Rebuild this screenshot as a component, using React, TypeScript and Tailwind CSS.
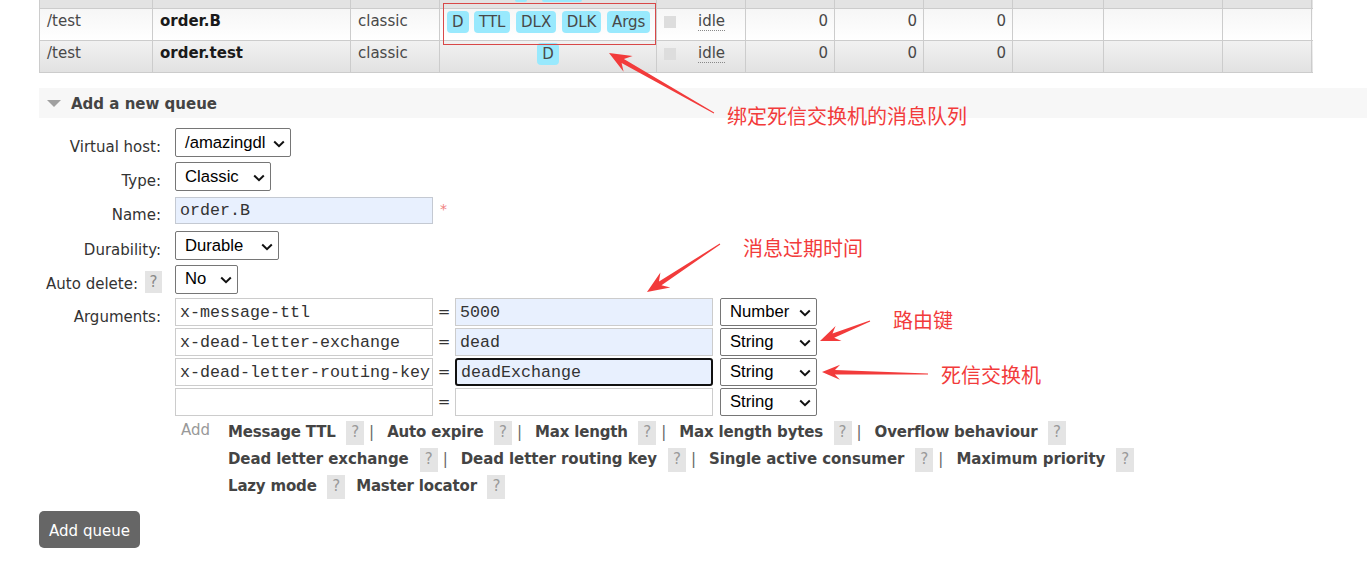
import React from "react";

const W = [
  "w-[113px]",
  "w-[198px]",
  "w-[89px]",
  "w-[217px]",
  "w-[89px]",
  "w-[89px]",
  "w-[89px]",
  "w-[89px]",
  "w-[91px]",
  "w-[119px]",
  "w-[90px]",
];

function Badge({ t }: { t: string }) {
  return (
    <span className="h-[22px] leading-[22px] px-[5px] rounded-[4px] bg-[#99e9fd] text-[#484848]">
      {t}
    </span>
  );
}

function Cell({
  i,
  children,
  className = "",
}: {
  i: number;
  children?: React.ReactNode;
  className?: string;
}) {
  return (
    <div className={`${W[i]} shrink-0 border-l border-[#cccccc] ${i === 10 ? "border-r" : ""} ${className}`}>
      {children}
    </div>
  );
}

function DataRow({ alt, name, badges }: { alt: boolean; name: string; badges: string[] }) {
  return (
    <div
      className={`flex h-[32px] border-t border-[#cccccc] ${
        alt ? "bg-linear-to-b from-[#f1f1f1] to-[#e2e2e2]" : "bg-linear-to-b from-[#f6f6f6] to-[#ffffff]"
      }`}
    >
      <Cell i={0} className="pl-[7px] pt-[2px] leading-[20px]">/test</Cell>
      <Cell i={1} className="pl-[7px] pt-[2px] leading-[20px] font-bold text-[#1a1a1a]">{name}</Cell>
      <Cell i={2} className="pl-[7px] pt-[2px] leading-[20px]">classic</Cell>
      <Cell i={3} className={`pt-[2px] flex gap-[5.5px] ${badges.length > 1 ? "pl-[7px]" : "justify-center"}`}>
        {badges.map((b) => (
          <Badge key={b} t={b} />
        ))}
      </Cell>
      <Cell i={4} className="pl-[7px] pt-[2px] flex">
        <span className="mt-[5px] w-[12px] h-[12px] bg-[#dddddd]" />
        <span className="ml-[22px] leading-[20px] border-b border-dotted border-[#888888] h-[20px]">idle</span>
      </Cell>
      <Cell i={5} className="pr-[6px] pt-[2px] leading-[20px] text-right">0</Cell>
      <Cell i={6} className="pr-[6px] pt-[2px] leading-[20px] text-right">0</Cell>
      <Cell i={7} className="pr-[6px] pt-[2px] leading-[20px] text-right">0</Cell>
      <Cell i={8} />
      <Cell i={9} />
      <Cell i={10} />
    </div>
  );
}

function Chevron() {
  return (
    <svg width="12" height="8" viewBox="0 0 12 8" className="shrink-0">
      <path d="M1.2 1.5 L6 6.2 L10.8 1.5" fill="none" stroke="#111" strokeWidth="2" />
    </svg>
  );
}

function Sel({ w, t, h = "h-[29px]" }: { w: string; t: string; h?: string }) {
  return (
    <div
      className={`${w} ${h} flex items-center justify-between border border-[#767676] rounded-[2px] bg-white pl-[9px] pr-[5px] pb-[1px] font-['Liberation_Sans',Arial,sans-serif] text-[16.67px] text-black`}
    >
      <span>{t}</span>
      <span className="pt-[3px]">
        <Chevron />
      </span>
    </div>
  );
}

function Inp({
  t,
  blue = false,
  focus = false,
}: {
  t: string;
  blue?: boolean;
  focus?: boolean;
}) {
  return (
    <div
      className={`w-[258px] h-[28px] flex items-center pl-[4px] font-['Liberation_Mono',monospace] text-[16.67px] text-[#333333] ${
        blue ? "bg-[#e8f0fe]" : "bg-white"
      } ${focus ? "border-2 border-[#111111] rounded-[3px] pl-[3px]" : "border border-[#cccccc]"}`}
    >
      {t}
    </div>
  );
}

function Help() {
  return (
    <span className="inline-flex w-[18px] h-[24px] items-center justify-center bg-[#e4e4e4] text-[#999999] font-normal">
      ?
    </span>
  );
}

function L({
  t,
  sep = true,
  last = false,
  loose = false,
}: {
  t: string;
  sep?: boolean;
  last?: boolean;
  loose?: boolean;
}) {
  return (
    <>
      <span className={`font-bold text-[#444444] ${loose ? "tracking-[-0.08px]" : "tracking-[-0.18px]"}`}>{t}</span>
      <span className={loose ? "ml-[11px]" : "ml-[10.5px]"}>
        <Help />
      </span>
      {!last && sep && <span className="ml-[5px] mr-[13px] text-[#666666]">|</span>}
      {!last && !sep && <span className="mr-[11px]" />}
    </>
  );
}

function arrowPts(tx: number, ty: number, px: number, py: number, hl: number, hw: number) {
  const dx = px - tx;
  const dy = py - ty;
  const len = Math.hypot(dx, dy);
  const ux = dx / len;
  const uy = dy / len;
  const nx = -uy;
  const ny = ux;
  const w0 = 0.5;
  const w1 = 2.3;
  const nd = hl * 0.72;
  const Nx = px - ux * nd;
  const Ny = py - uy * nd;
  const Bx = px - ux * hl;
  const By = py - uy * hl;
  const pts = [
    [tx + nx * w0, ty + ny * w0],
    [Nx + nx * w1, Ny + ny * w1],
    [Bx + nx * hw, By + ny * hw],
    [px, py],
    [Bx - nx * hw, By - ny * hw],
    [Nx - nx * w1, Ny - ny * w1],
    [tx - nx * w0, ty - ny * w0],
  ];
  return pts.map((p) => `${p[0].toFixed(1)},${p[1].toFixed(1)}`).join(" ");
}

export default function App() {
  const red = "#f23b3b";
  return (
    <div className="relative w-[1367px] h-[569px] overflow-hidden bg-white font-['DejaVu_Sans',Verdana,sans-serif] text-[15px] text-[#484848]">
      {/* table */}
      <div className="ml-[39px] w-[1274px] border-b border-[#cccccc]">
        <div className="flex h-[8px] bg-[#e3e3e3]">
          {W.map((_, i) => (
            <Cell key={i} i={i} className={i === 3 ? "flex pl-[75px]" : ""}>
              {i === 3 && (
                <>
                  <span className="w-[12px] h-[2px] rounded-b-[3px] bg-[#99e9fd]" />
                  <span className="ml-[15px] w-[40px] h-[2px] rounded-b-[3px] bg-[#99e9fd]" />
                </>
              )}
            </Cell>
          ))}
        </div>
        <DataRow alt={false} name="order.B" badges={["D", "TTL", "DLX", "DLK", "Args"]} />
        <DataRow alt={true} name="order.test" badges={["D"]} />
      </div>

      {/* section header */}
      <div className="mt-[15px] ml-[39px] h-[30px] bg-[#f7f7f7] flex items-center pl-[8px]">
        <svg width="14" height="7" viewBox="0 0 14 7">
          <polygon points="0,0 14,0 7,7" fill="#a0a0a0" />
        </svg>
        <span className="ml-[10px] pt-[2px] font-bold text-[#444444] leading-[18px]">Add a new queue</span>
      </div>

      {/* form */}
      <div className="mt-[10px] text-[#333333]">
        <div className="flex h-[34px]">
          <div className="ml-[39px] w-[122px] text-right pt-[9.5px] leading-[18px]">Virtual host:</div>
          <div className="ml-[14px]">
            <Sel w="w-[116px]" t="/amazingdl" />
          </div>
        </div>
        <div className="flex h-[35px]">
          <div className="ml-[39px] w-[122px] text-right pt-[9.5px] leading-[18px]">Type:</div>
          <div className="ml-[14px]">
            <Sel w="w-[96px]" t="Classic" />
          </div>
        </div>
        <div className="flex h-[34px]">
          <div className="ml-[39px] w-[122px] text-right pt-[9px] leading-[18px]">Name:</div>
          <div className="ml-[14px] flex">
            <div className="w-[258px] h-[27px] flex items-center pl-[4px] bg-[#e8f0fe] border border-[#c4c9d2] font-['Liberation_Mono',monospace] text-[16.67px] text-[#333333]">
              order.B
            </div>
            <span className="ml-[7px] mt-[5px] text-[#f08080] text-[14px] leading-[14px]">*</span>
          </div>
        </div>
        <div className="flex h-[34px]">
          <div className="ml-[39px] w-[122px] text-right pt-[9.5px] leading-[18px]">Durability:</div>
          <div className="ml-[14px]">
            <Sel w="w-[104px]" t="Durable" />
          </div>
        </div>
        <div className="flex h-[33px]">
          <div className="ml-[39px] w-[123px] flex justify-end items-start">
            <span className="pt-[9.5px] leading-[18px]">Auto delete:</span>
            <span className="ml-[7px] mt-[6px] inline-flex w-[17px] h-[22px] items-center justify-center bg-[#e4e4e4] text-[#888888]">
              ?
            </span>
          </div>
          <div className="ml-[13px]">
            <Sel w="w-[63px]" t="No" h="h-[28.5px]" />
          </div>
        </div>

        {/* arguments */}
        <div className="flex">
          <div className="ml-[39px] w-[122px] text-right pt-[10px] leading-[18px]">Arguments:</div>
          <div className="ml-[14px] flex flex-col gap-[2px]">
            {[
              ["x-message-ttl", "5000", "Number", "b"],
              ["x-dead-letter-exchange", "dead", "String", "b"],
              ["x-dead-letter-routing-key", "deadExchange", "String", "f"],
              ["", "", "String", ""],
            ].map(([k, v, ty, m], idx) => (
              <div key={idx} className="flex items-center h-[28px]">
                <Inp t={k} />
                <span className="w-[22px] text-center">=</span>
                <Inp t={v} blue={m === "b" || m === "f"} focus={m === "f"} />
                <div className="ml-[7px]">
                  <Sel w="w-[97px]" t={ty} h="h-[28.5px]" />
                </div>
              </div>
            ))}
          </div>
        </div>

        {/* add links */}
        <div className="flex mt-[3px]">
          <div className="ml-[181px] w-[47px] h-[27px] leading-[22px] text-[#999999]">Add</div>
          <div className="flex flex-col">
            <div className="flex items-center h-[27px] whitespace-nowrap">
              <L t="Message TTL" />
              <L t="Auto expire" />
              <L t="Max length" />
              <L t="Max length bytes" />
              <L t="Overflow behaviour" last />
            </div>
            <div className="flex items-center h-[27px] whitespace-nowrap">
              <L t="Dead letter exchange" loose />
              <L t="Dead letter routing key" loose />
              <L t="Single active consumer" loose />
              <L t="Maximum priority" loose last />
            </div>
            <div className="flex items-center h-[27px] whitespace-nowrap">
              <L t="Lazy mode" sep={false} />
              <L t="Master locator" last />
            </div>
          </div>
        </div>

        <div className="ml-[39px] mt-[11px] w-[101px] h-[37px] pt-[3px] rounded-[5px] bg-[#666666] text-white flex items-center justify-center">
          Add queue
        </div>
      </div>

      {/* annotations */}
      <div className="absolute left-[443px] top-[3px] w-[213px] h-[42px] border border-[#d84848]" />
      <svg className="absolute left-0 top-0 pointer-events-none" width="1367" height="569">
        <polygon points={arrowPts(714, 113, 609, 53, 22, 9)} fill={red} />
        <polygon points={arrowPts(720, 244, 647, 292, 22, 9)} fill={red} />
        <polygon points={arrowPts(870, 321, 820, 341, 20, 8)} fill={red} />
        <polygon points={arrowPts(928, 374, 822, 372, 18, 7.5)} fill={red} />
      </svg>
      <div className="absolute left-[727px] top-[106px] text-[20px] leading-[20px] font-['Noto_Sans_CJK_SC',sans-serif] text-[#f23b3b] whitespace-nowrap">
        绑定死信交换机的消息队列
      </div>
      <div className="absolute left-[743px] top-[238px] text-[20px] leading-[20px] font-['Noto_Sans_CJK_SC',sans-serif] text-[#f23b3b] whitespace-nowrap">
        消息过期时间
      </div>
      <div className="absolute left-[893px] top-[310px] text-[20px] leading-[20px] font-['Noto_Sans_CJK_SC',sans-serif] text-[#f23b3b] whitespace-nowrap">
        路由键
      </div>
      <div className="absolute left-[941px] top-[365px] text-[20px] leading-[20px] font-['Noto_Sans_CJK_SC',sans-serif] text-[#f23b3b] whitespace-nowrap">
        死信交换机
      </div>
    </div>
  );
}
